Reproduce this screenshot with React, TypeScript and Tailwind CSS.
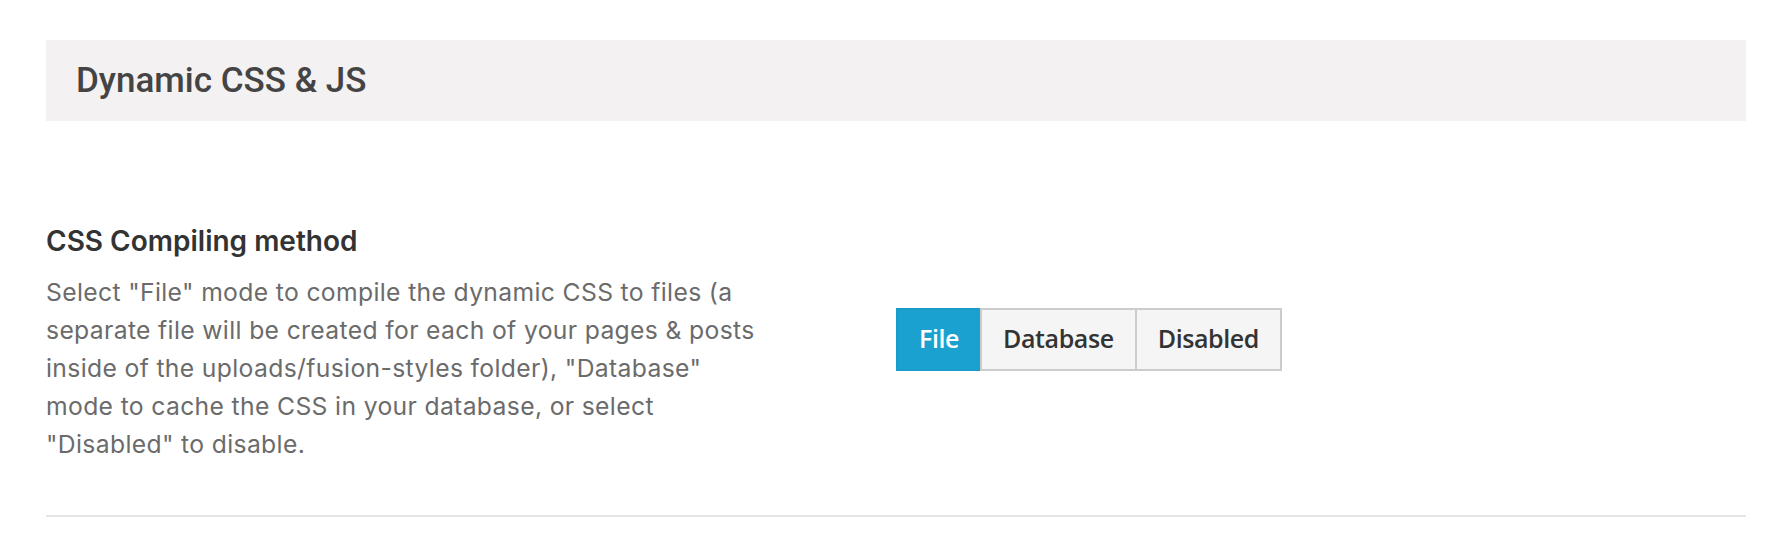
export default function App() {
  const options = ["File", "Database", "Disabled"];
  const selected = "File";

  return (
    <div className="min-h-[540px] w-full bg-white pl-[46px] pr-[36px] pt-[40px]">
      <div className="flex h-[81px] items-center bg-[#f3f1f2] pl-[30px]">
        <h2 className="font-['Roboto',sans-serif] text-[35px] font-medium leading-none text-[#444444]">
          Dynamic CSS &amp; JS
        </h2>
      </div>

      <div className="flex items-center border-b-2 border-[#e5e5e5] pb-[52px] pt-[102px]">
        <div className="w-[850px] shrink-0">
          <h3 className="font-['Inter',sans-serif] text-[28px] font-semibold leading-[36px] text-[#333333]">
            CSS Compiling method
          </h3>
          <p className="mt-[14px] w-[722px] font-['Inter',sans-serif] text-[24.7px] leading-[38px] tracking-[0.35px] text-[#6b6b6b]">
            Select "File" mode to compile the dynamic CSS to files (a separate file will be created for
            each of your pages &amp; posts inside of the uploads/fusion-styles folder), "Database" mode to
            cache the CSS in your database, or select "Disabled" to disable.
          </p>
        </div>

        <div className="-mt-[8px] flex h-[63px] font-['Open_Sans',sans-serif] text-[25px] font-semibold tracking-[-0.4px]">
          {options.map((opt, i) => (
            <button
              key={opt}
              className={
                opt === selected
                  ? "border-2 border-[#1a9ccb] bg-[#1ba1d0] px-[21px] text-white"
                  : "border-2 border-[#cccccc] bg-[#f5f5f5] px-[21px] text-[#333333] " +
                    (i > 0 ? "-ml-[2px]" : "")
              }
            >
              {opt}
            </button>
          ))}
        </div>
      </div>
    </div>
  );
}
